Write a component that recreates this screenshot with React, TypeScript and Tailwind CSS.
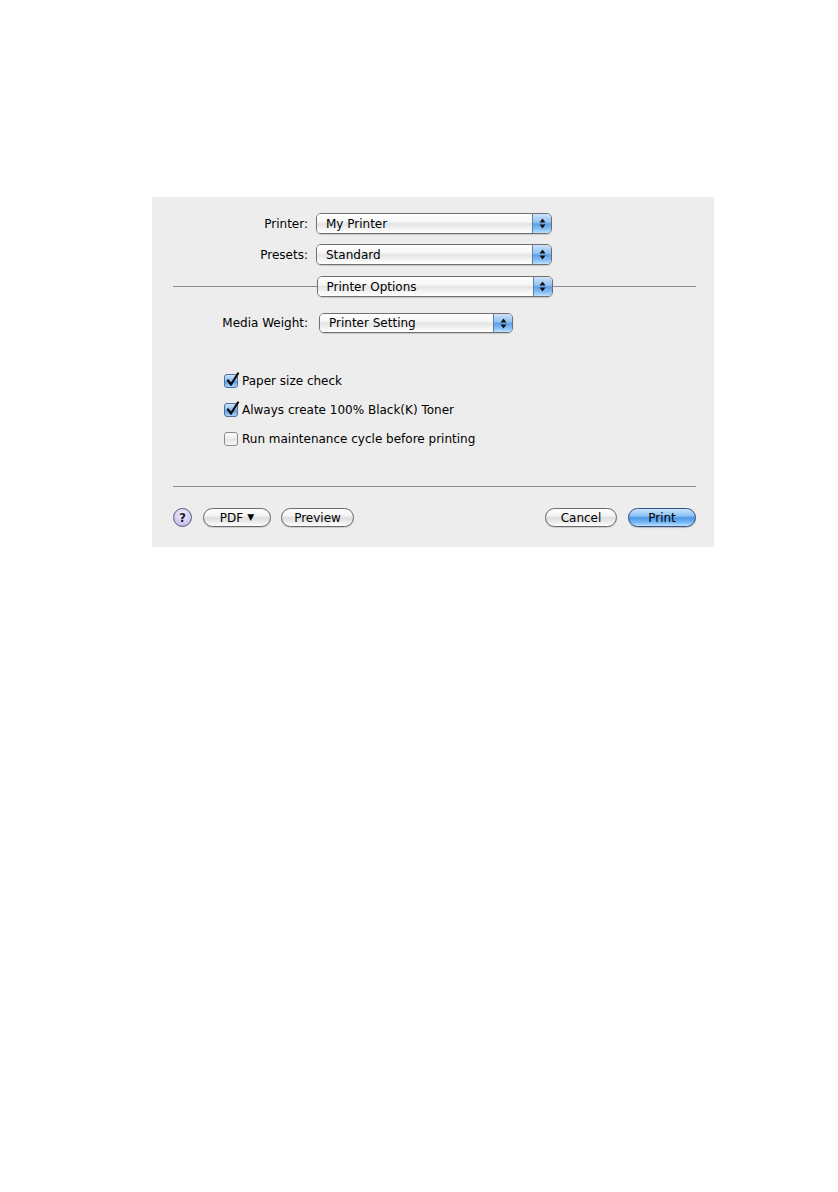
import React from 'react';

const font = { fontFamily: '"DejaVu Sans", "Liberation Sans", sans-serif' };

function Arrows() {
  return (
    <svg width="7" height="11" viewBox="0 0 7 11">
      <path d="M3.5 0.5 L6.5 4.5 L0.5 4.5 Z" fill="#111" />
      <path d="M3.5 10.5 L6.5 6.5 L0.5 6.5 Z" fill="#111" />
    </svg>
  );
}

function PopUp({ label, width, height = 21 }: { label: string; width: number; height?: number }) {
  return (
    <div
      className="flex items-stretch rounded-[5px] border border-[#6f6f6f] overflow-hidden shadow-[0_1px_1px_rgba(0,0,0,0.15)]"
      style={{ width, height }}
    >
      <div className="flex-1 flex items-center pl-[9px] text-[12px] text-black bg-[linear-gradient(to_bottom,#ffffff_0%,#f6f6f6_40%,#e4e4e4_52%,#f2f2f2_75%,#ffffff_100%)]">
        {label}
      </div>
      <div className="w-[19px] flex items-center justify-center border-l border-[#5d7fae] bg-[linear-gradient(to_bottom,#cfe4fa_0%,#8fbff0_45%,#5d9fe6_52%,#86c0f6_80%,#c0e3ff_100%)]">
        <Arrows />
      </div>
    </div>
  );
}

function CheckBox({ checked }: { checked: boolean }) {
  if (!checked) {
    return (
      <div className="w-[14px] h-[14px] rounded-[3px] border border-[#8a8a8a] bg-[linear-gradient(to_bottom,#ffffff,#e6e6e6_55%,#f8f8f8)]" />
    );
  }
  return (
    <div className="relative w-[14px] h-[14px] rounded-[3px] border border-[#4f6f9c] bg-[linear-gradient(to_bottom,#cfe5fb_0%,#8fc0f0_45%,#5c9fe6_55%,#a6d3ff_100%)]">
      <svg className="absolute left-[1px] top-[-3px]" width="14" height="15" viewBox="0 0 14 15">
        <path d="M2 8.5 L5 12.5 L12 1.5" fill="none" stroke="#0d0d0d" strokeWidth="2.3" strokeLinecap="round" strokeLinejoin="round" />
      </svg>
    </div>
  );
}

function PillButton({ children, width, primary }: { children: React.ReactNode; width: number; primary?: boolean }) {
  return (
    <div
      className={
        primary
          ? 'h-[19px] rounded-full border border-[#2f4f86] flex items-center justify-center text-[12px] text-black bg-[linear-gradient(to_bottom,#c9e3fb_0%,#8cc2f4_40%,#4e97e6_52%,#79b9f4_80%,#bfe3ff_100%)] shadow-[0_1px_1px_rgba(0,0,0,0.2)]'
          : 'h-[19px] rounded-full border border-[#6a6a6a] flex items-center justify-center text-[12px] text-black bg-[linear-gradient(to_bottom,#ffffff_0%,#f3f3f3_40%,#dedede_52%,#efefef_80%,#ffffff_100%)] shadow-[0_1px_1px_rgba(0,0,0,0.15)]'
      }
      style={{ width }}
    >
      {children}
    </div>
  );
}

export default function App() {
  const options = [
    { label: 'Paper size check', checked: true },
    { label: 'Always create 100% Black(K) Toner', checked: true },
    { label: 'Run maintenance cycle before printing', checked: false },
  ];

  return (
    <div className="min-h-[1192px] w-full bg-white pt-[197px] pl-[152px]" style={font}>
      <div className="w-[562px] h-[350px] bg-[#ededed] flex flex-col pt-[16px] text-black">
        {/* Printer */}
        <div className="flex items-center">
          <div className="w-[156px] text-right text-[12px]">Printer:</div>
          <div className="ml-[8px]">
            <PopUp label="My Printer" width={236} />
          </div>
        </div>

        {/* Presets */}
        <div className="flex items-center mt-[10px]">
          <div className="w-[156px] text-right text-[12px]">Presets:</div>
          <div className="ml-[8px]">
            <PopUp label="Standard" width={236} />
          </div>
        </div>

        {/* Pane selector */}
        <div className="flex items-center mt-[11px] pl-[21px] pr-[18px]">
          <div className="flex-1 h-px bg-[#8c8c8c]" />
          <PopUp label="Printer Options" width={236} />
          <div className="flex-1 h-px bg-[#8c8c8c]" />
        </div>

        {/* Media weight */}
        <div className="flex items-center mt-[16px]">
          <div className="w-[156px] text-right text-[12px]">Media Weight:</div>
          <div className="ml-[11px]">
            <PopUp label="Printer Setting" width={194} height={20} />
          </div>
        </div>

        {/* Options */}
        <div className="flex flex-col mt-[33px] pl-[72px]">
          {options.map((o) => (
            <div key={o.label} className="h-[29px] flex items-center gap-[4px]">
              <CheckBox checked={o.checked} />
              <span className="text-[12px]">{o.label}</span>
            </div>
          ))}
        </div>

        <div className="mt-[33px] ml-[21px] mr-[18px] h-px bg-[#8c8c8c]" />

        {/* Buttons */}
        <div className="flex items-center mt-[21px] pl-[21px] pr-[18px]">
          <div className="w-[19px] h-[19px] rounded-full border border-[#5b5b7a] flex items-center justify-center text-[12px] font-bold text-[#1a1a2a] bg-[radial-gradient(circle_at_50%_30%,#f4f0ff_0%,#d6ccf3_55%,#b3a6e0_100%)]">
            ?
          </div>
          <div className="ml-[11px]">
            <PillButton width={68}>
              <span>PDF</span>
              <span className="ml-[4px] text-[9px]">▼</span>
            </PillButton>
          </div>
          <div className="ml-[10px]">
            <PillButton width={73}>Preview</PillButton>
          </div>
          <div className="flex-1" />
          <PillButton width={72}>Cancel</PillButton>
          <div className="ml-[11px]">
            <PillButton width={68} primary>
              Print
            </PillButton>
          </div>
        </div>
      </div>
    </div>
  );
}
